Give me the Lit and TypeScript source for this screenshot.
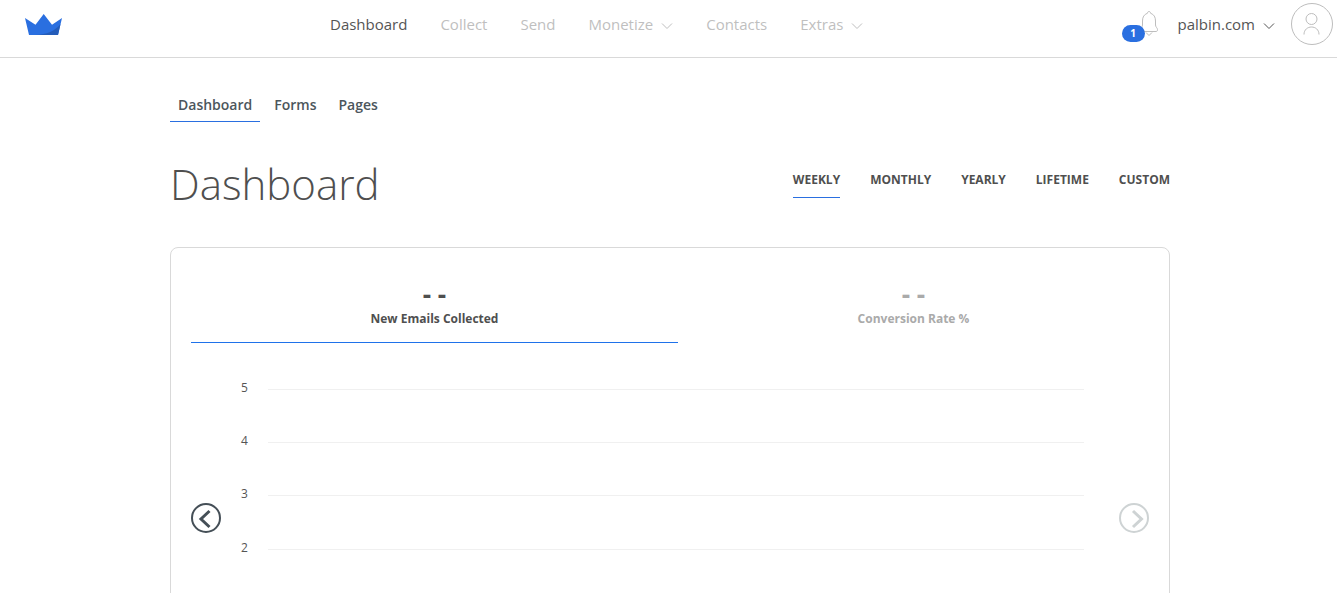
import { LitElement, html, css, svg, nothing } from "lit";
import { customElement, state } from "lit/decorators.js";
import { classMap } from "lit/directives/class-map.js";

const chevron = html`<svg class="chevron" width="12" height="8" viewBox="0 0 12 8" fill="none" stroke="currentColor" aria-hidden="true"><path d="M1 1.5 6 6.5 11 1.5" /></svg>`;

@customElement("app-header")
class AppHeader extends LitElement {
  static styles = css`
    :host { display: block; font-family: "Open Sans", sans-serif; }
    .bar {
      display: flex;
      align-items: flex-start;
      height: 57px;
      border-bottom: 1px solid #d9d9d9;
    }
    .logo { display: block; flex: 0 0 306px; padding: 14px 0 0 24px; box-sizing: content-box; height: 22px; }
    .logo svg { display: block; }
    .links { display: flex; gap: 33px; flex: 1; }
    .link {
      display: flex;
      align-items: center;
      gap: 8px;
      height: 48px;
      font-size: 15px;
      line-height: 20px;
      color: #bfbfbf;
      text-decoration: none;
      white-space: nowrap;
    }
    .current, .account { color: #555; }
    .chevron { display: block; margin-top: 4px; }
    .tools { display: flex; align-items: flex-start; padding-right: 4px; }
    .bell {
      position: relative;
      padding: 10px 0 0;
      margin: 0 19px 0 0;
      border: 0;
      background: none;
      font-family: inherit;
    }
    .bell svg { display: block; }
    .badge {
      position: absolute;
      right: 14px;
      top: 25px;
      width: 23px;
      border-radius: 9px;
      background: #2a6fe0;
      color: #fff;
      font-size: 10px;
      font-weight: 700;
      line-height: 17px;
      text-align: center;
    }
    .account { margin-right: 16px; }
    .avatar {
      display: block;
      margin-top: 3px;
      padding: 0;
      border: 0;
      background: none;
    }
    .avatar svg { display: block; }
  `;

  private items = [
    { name: "Dashboard" },
    { name: "Collect" },
    { name: "Send" },
    { name: "Monetize", menu: true },
    { name: "Contacts" },
    { name: "Extras", menu: true },
  ];

  render() {
    return html`
      <header class="bar">
        <a class="logo" href="#" aria-label="Home">
          <svg width="40" height="22" viewBox="0 0 40 22">
            <path fill="#2a6fe0" d="M1 4 11.5 10.7 19.7 0 28 10.7 38 4 34 21H5Z" />
            <path fill="#245cb9" d="M36.500 10 34 21H11C23 20.500 31 17 36.500 10Z" />
          </svg>
        </a>
        <nav class="links" aria-label="Main">
          ${this.items.map((item, i) => html`
            <a href="#" class=${classMap({ link: true, current: i === 0 })}>${item.name}${item.menu ? chevron : nothing}</a>`)}
        </nav>
        <div class="tools">
          <button class="bell" aria-label="Notifications">
            <svg width="20" height="27" viewBox="0 0 20 27" fill="none" stroke="#bdbdbd">
              <path d="M8.500 3.200C8.500 .9 11.500 .9 11.500 3.200C15 4.500 16.500 7 16.500 11V15C16.500 17 18.500 18 18.500 19.500C18.500 21 18 21.500 17 21.500H3C2 21.500 1.500 21 1.500 19.500C1.500 18 3.500 17 3.500 15V11C3.500 7 5 4.500 8.500 3.200Z" />
              <path d="M7 22.500 10 25.500 13 22.500" />
            </svg>
            <span class="badge">1</span>
          </button>
          <a href="#" class="link account">palbin.com${chevron}</a>
          <button class="avatar" aria-label="Profile">
            <svg width="42" height="42" viewBox="0 0 42 42" fill="none" stroke="#bdbdbd">
              <circle cx="21" cy="21" r="20.500" />
              <circle cx="20.500" cy="16" r="5.500" />
              <path d="M13 31.500C13 21.500 28 21.500 28 31.500" />
            </svg>
          </button>
        </div>
      </header>`;
  }
}

@customElement("stats-card")
class StatsCard extends LitElement {
  static styles = css`
    :host { display: block; font-family: "Open Sans", sans-serif; }
    .card { border: 1px solid #d9d9d9; border-radius: 8px; padding: 20px; }
    .metrics { display: grid; grid-template-columns: 487fr 471fr; }
    .metric {
      height: 75px;
      padding: 0 0 2px;
      border: 0;
      border-bottom: 1px solid transparent;
      background: none;
      font-family: inherit;
      font-weight: 700;
      color: #aaa;
    }
    .chosen { color: #4f4f4f; border-bottom-color: #1f72ea; }
    .value { display: block; font-size: 26px; line-height: 30px; }
    .caption { display: block; font-size: 12px; line-height: 20px; }
    .chart { display: flex; align-items: center; padding-top: 18px; }
    .plot {
      flex: 1;
      display: grid;
      grid-auto-rows: 1fr;
      height: 320px;
      margin: 0 35px 0 20px;
    }
    .row { display: grid; grid-template-columns: 7px 1fr; column-gap: 20px; align-items: center; }
    .tick { font-size: 12px; line-height: 16px; color: #555; }
    .rule { height: 1px; margin-top: 3px; background: #f0f0f0; }
    .step { flex: none; margin-bottom: 6px; padding: 0; border: 0; background: none; color: #454f57; }
    .step:disabled { color: #ced3d4; }
    .step svg { display: block; }
  `;

  @state() private selected = 0;

  private arrow(path: string) {
    return html`<svg width="30" height="30" viewBox="0 0 30 30" fill="none" stroke="currentColor">
      <circle cx="15" cy="15" r="14" stroke-width="2" />${svg`<path d=${path} stroke-width="3" />`}
    </svg>`;
  }

  render() {
    return html`
      <section class="card">
        <div class="metrics">
          ${["New Emails Collected", "Conversion Rate %"].map((name, i) => html`
            <button class=${classMap({ metric: true, chosen: this.selected === i })} @click=${() => (this.selected = i)}>
              <span class="value">- -</span>
              <span class="caption">${name}</span>
            </button>`)}
        </div>
        <div class="chart">
          <button class="step" aria-label="Previous period">${this.arrow("M18.500 8 10 16 18.500 24")}</button>
          <div class="plot">
            ${[5, 4, 3, 2, 1, 0].map((n) => html`
              <div class="row"><span class="tick">${n}</span><span class="rule"></span></div>`)}
          </div>
          <button class="step" aria-label="Next period" disabled>${this.arrow("M14 8 22.500 16 14 24")}</button>
        </div>
      </section>`;
  }
}

@customElement("app-root")
class AppRoot extends LitElement {
  static styles = css`
    :host {
      display: block;
      height: 100vh;
      overflow-y: auto;
      scrollbar-width: none;
      background: #fff;
      font-family: "Open Sans", sans-serif;
    }
    main { padding-left: 3px; }
    .page { max-width: 1000px; margin: 0 auto; padding: 32px 0 20px; }
    .tabs { display: flex; gap: 6px; }
    .tab {
      padding: 4px 8px 6px;
      border-bottom: 1px solid transparent;
      font-size: 14px;
      font-weight: 600;
      line-height: 21px;
      color: #4c565c;
      text-decoration: none;
    }
    .active { border-bottom-color: #2a6fe0; }
    .heading { display: flex; justify-content: space-between; align-items: flex-start; padding: 32px 0 33px; }
    h1 { margin: 0; font-size: 42px; font-weight: 300; line-height: 60px; color: #4f4f4f; }
    .ranges { display: flex; gap: 30px; padding-top: 17px; }
    .range {
      padding: 0 0 8px;
      border: 0;
      border-bottom: 1px solid transparent;
      background: none;
      font: 700 12px/18px "Open Sans", sans-serif;
      color: #4f4f4f;
    }
    .range.active { border-bottom-color: #2a6fe0; }
  `;

  @state() private range = "WEEKLY";

  render() {
    return html`
      <app-header></app-header>
      <main>
        <div class="page">
          <nav class="tabs" aria-label="Sections">
            ${["Dashboard", "Forms", "Pages"].map((name, i) => html`
              <a href="#" class=${classMap({ tab: true, active: i === 0 })}>${name}</a>`)}
          </nav>
          <div class="heading">
            <h1>Dashboard</h1>
            <div class="ranges">
              ${["WEEKLY", "MONTHLY", "YEARLY", "LIFETIME", "CUSTOM"].map((name) => html`
                <button class=${classMap({ range: true, active: this.range === name })} @click=${() => (this.range = name)}>${name}</button>`)}
            </div>
          </div>
          <stats-card></stats-card>
        </div>
      </main>`;
  }
}
